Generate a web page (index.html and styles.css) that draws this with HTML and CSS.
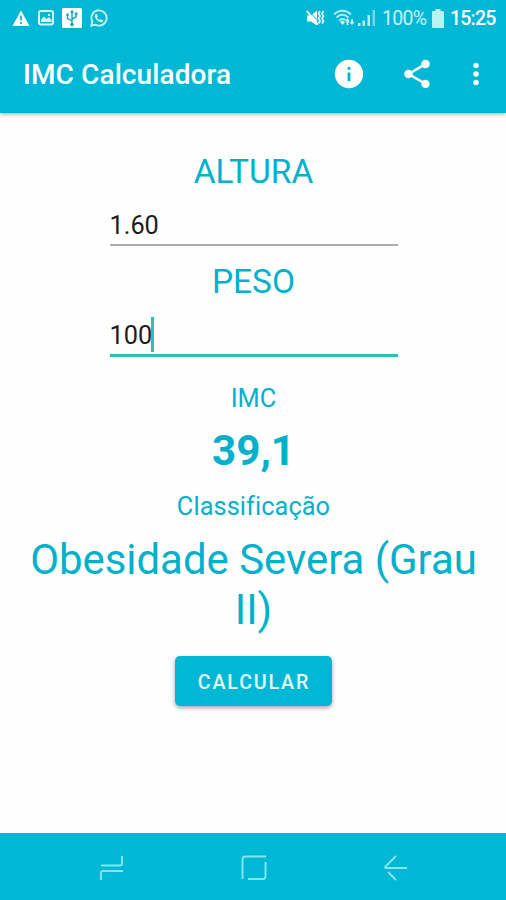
FILE: index.html
```
<!DOCTYPE html>
<html lang="pt-BR">
<head>
  <meta charset="UTF-8">
  <meta name="viewport" content="width=device-width, initial-scale=1.0">
  <title>IMC Calculadora</title>
  <link rel="stylesheet" href="styles.css">
</head>
<body>

  <header>
    <div class="status-bar">
      <div class="notifications">
        <svg width="18" height="17" viewBox="0 0 18 17"><path fill="#fff" d="M9 .5 17.5 16H.5z"/><path stroke="#00b8d6" stroke-width="1.8" d="M9 5.5v5M9 12v2"/></svg>
        <svg width="16" height="16" viewBox="0 0 16 16"><rect x="1" y="1" width="14" height="13.500" rx="2" fill="none" stroke="#d9f7fa" stroke-width="2"/><path fill="#d9f7fa" d="M3 12V9.500l3-3 2.500 2.500L11 7l2.500 3v2zM10 4h2v2h-2z"/></svg>
        <svg width="20" height="20" viewBox="0 0 20 20"><rect width="20" height="20" rx="1.500" fill="#fff"/><g fill="none" stroke="#16a5b8" stroke-width="1.400"><path d="M10 4v12M10 13 5.500 10.500V7M10 11l4-2V6"/></g><path fill="#16a5b8" d="m10 1.500 2 3.500H8zM4.300 5.500h2.400v2.500H4.300zM12.800 4.500h2.600V7h-2.600z"/><circle cx="10" cy="16.500" r="1.800" fill="#16a5b8"/></svg>
        <svg width="18" height="18" viewBox="0 0 18 18"><path fill="none" stroke="#c9f3f8" stroke-width="1.800" d="M1.300 16.700 2.400 12.700A7.600 7.600 0 1 1 5.300 15.600z"/><path fill="#c9f3f8" d="M6.500 4.700 7.900 7.300 7 8.500c.7 1.200 1.500 1.900 2.700 2.500l1.100-1.100 2.500 1.300c0 1.300-1.100 2.200-2.400 2C7.700 12.700 5 9.900 4.800 7c0-1.100.6-2 1.700-2.300z"/></svg>
      </div>
      <div class="indicators">
        <svg class="mute" width="19" height="18" viewBox="0 0 19 18"><path fill="#fff" d="M1 6.500h4l6-5v15l-6-4H1z"/><path stroke="#00b8d6" stroke-width="1" d="M2 1 12.500 12.500"/><path stroke="#fff" stroke-width="1.800" d="M.8 2 12 15.500"/><path fill="none" stroke="#d9f7fa" stroke-width="1.800" d="m14 2-1.500 2.500L14 7l-1.500 2.500L14 12l-1.500 2.500M17.500 2 16 4.500 17.500 7 16 9.500l1.500 2.500-1.500 2.500"/></svg>
        <svg class="wifi" width="22" height="18" viewBox="0 0 22 18"><g fill="none" stroke="#b3edf4" stroke-width="1.800"><path d="M1 5.500C6 .5 13 .5 18 5.500M3.500 8.500c4-3.700 8-3.700 12 0M6 11.500c2.500-2 4.500-2 6.500-.5"/></g><path fill="#d0f5f8" d="m7 13 2.500-1.500L12 13l-2.500 3zM14.500 9l2.500 3.500h-1.500V16h-2v-3.500H12zM19 16l-2.500-3H18v-2.500h2V13h1.500z"/></svg>
        <svg class="signal" width="18" height="18" viewBox="0 0 18 18"><path fill="#b3edf4" d="M0 14h2.500v3H0zM4.500 11.500H7V17H4.500zM9.500 6H12v11H9.500z"/><path fill="#70dbe8" d="M14.500 1H17v16h-2.500z"/></svg>
        <span class="percent">100%</span>
        <svg class="battery" width="12" height="19" viewBox="0 0 12 19"><path fill="#b9f2f3" d="M3.500 0h5v2H11a1 1 0 0 1 1 1v15a1 1 0 0 1-1 1H1a1 1 0 0 1-1-1V3a1 1 0 0 1 1-1h2.500z"/></svg>
        <span class="clock">15:25</span>
      </div>
    </div>

    <div class="toolbar">
      <h1>IMC Calculadora</h1>
      <div class="actions">
        <svg width="34" height="34" viewBox="0 0 24 24"><path d="M12 2C6.480 2 2 6.480 2 12s4.480 10 10 10 10-4.480 10-10S17.520 2 12 2zm1 15h-2v-6h2v6zm0-8h-2V7h2v2z"/></svg>
        <svg width="34" height="34" viewBox="0 0 24 24"><path d="M18 16.080c-.76 0-1.440.3-1.960.77L8.910 12.700c.05-.23.09-.46.09-.7s-.04-.47-.09-.7l7.050-4.110c.54.5 1.250.81 2.040.81 1.660 0 3-1.340 3-3s-1.340-3-3-3-3 1.340-3 3c0 .24.04.47.09.7L8.040 9.810C7.500 9.310 6.790 9 6 9c-1.660 0-3 1.340-3 3s1.340 3 3 3c.79 0 1.500-.31 2.040-.81l7.120 4.160c-.05.21-.08.43-.08.65 0 1.610 1.310 2.920 2.920 2.920 1.610 0 2.920-1.310 2.920-2.920s-1.310-2.920-2.920-2.920z"/></svg>
        <svg width="34" height="34" viewBox="0 0 24 24"><path d="M12 8c1.100 0 2-.9 2-2s-.9-2-2-2-2 .9-2 2 .9 2 2 2zm0 2c-1.100 0-2 .9-2 2s.9 2 2 2 2-.9 2-2-.9-2-2-2zm0 6c-1.100 0-2 .9-2 2s.9 2 2 2 2-.9 2-2-.9-2-2-2z"/></svg>
      </div>
    </div>
  </header>

  <main>
    <div class="label">ALTURA</div>
    <div class="field">1.60</div>

    <div class="label">PESO</div>
    <div class="field active">100<span class="caret"></span></div>

    <div class="caption">IMC</div>
    <div class="result">39,1</div>

    <div class="caption">Classificação</div>
    <div class="classification">Obesidade Severa (Grau II)</div>

    <button type="button">CALCULAR</button>
  </main>

  <nav>
    <svg width="24" height="26" viewBox="0 0 24 26"><path d="M1 10.500h19q2 0 2-2V1M1 25v-7q0-2 2-2h20"/></svg>
    <svg width="26" height="26" viewBox="0 0 26 26"><path d="M1.500 24V4.500q0-3 3-3H25M24.500 7v14.500q0 2.500-2.500 2.500H7"/></svg>
    <svg width="24" height="26" viewBox="0 0 24 26"><path d="M12 1 1.500 11.500q-1 1.500 1 1.500H23M4 17l8 8"/></svg>
  </nav>

</body>
</html>
```

FILE: styles.css
```
* {
  box-sizing: border-box;
}

body {
  font-family: Roboto, sans-serif;
  margin: 0;
  height: 900px;
  display: flex;
  flex-direction: column;
  background-color: #fefefe;
  color: #00b1cb;
  overflow: hidden;
}

svg {
  display: block;
  flex: none;
}

header {
  height: 113px;
  background-color: #00b8d6;
  color: white;
  box-shadow: 0 1px 4px rgba(0, 0, 0, 0.35);
}

.status-bar {
  height: 36px;
  display: flex;
  justify-content: space-between;
  align-items: center;
  padding: 0 10px 0 12px;
}

.notifications,
.indicators {
  display: flex;
  align-items: center;
}

.notifications {
  gap: 8px;
}

.mute {
  margin-right: 8px;
}

.wifi {
  margin-right: 3px;
}

.signal {
  margin-right: 6px;
}

.percent {
  width: 44px;
  margin-right: 6px;
  font-size: 19.5px;
  letter-spacing: -0.7px;
  color: #c9f3f8;
}

.battery {
  margin-right: 6px;
}

.clock {
  width: 46px;
  font-size: 19.5px;
  font-weight: 500;
  letter-spacing: -0.8px;
}

.toolbar {
  height: 76px;
  display: flex;
  justify-content: space-between;
  align-items: center;
  padding: 0 13px 0 23px;
}

h1 {
  margin: 0;
  font-size: 28px;
  font-weight: 500;
  letter-spacing: 0.1px;
}

.actions {
  display: flex;
  gap: 34px;
  fill: white;
}

.actions svg:last-child {
  margin-left: -9px;
}

main {
  flex: 1;
  display: flex;
  flex-direction: column;
  align-items: center;
  padding: 39px 21px 0 22px;
  text-align: center;
}

.label {
  font-size: 33.5px;
  line-height: 40px;
}

.field {
  position: relative;
  width: 288px;
  height: 54px;
  padding-top: 19px;
  margin-bottom: 16px;
  border-bottom: 2px solid #adadad;
  font-size: 25.3px;
  line-height: 30px;
  text-align: left;
  color: #1c1c1c;
}

.active {
  height: 55px;
  border-bottom: 3px solid #26c6ae;
  margin-bottom: 27px;
}

.caret {
  position: absolute;
  left: 41px;
  top: 15px;
  width: 3px;
  height: 35px;
  background-color: #26c6ae;
}

.caption {
  font-size: 25.3px;
  line-height: 30px;
  letter-spacing: 0.1px;
}

.result {
  margin: 13px 0 17px;
  font-size: 42.200px;
  font-weight: bold;
  line-height: 48px;
}

.classification {
  margin-top: 13px;
  font-size: 41.900px;
  line-height: 49.500px;
}

button {
  width: 157px;
  height: 50px;
  margin-top: 22px;
  padding: 2px 0 0 1px;
  border: none;
  border-radius: 5px;
  background-color: #00b8d6;
  color: #e3fbfd;
  font-family: inherit;
  font-size: 19.700px;
  font-weight: 500;
  letter-spacing: 1.800px;
  box-shadow: 0 2px 4px rgba(0, 0, 0, 0.35);
}

nav {
  height: 67px;
  display: flex;
  justify-content: space-between;
  align-items: center;
  padding: 2px 98px 0 100px;
  background-color: #00b8d6;
}

nav path {
  fill: none;
  stroke: #86e6ef;
  stroke-width: 1.900;
}
```
